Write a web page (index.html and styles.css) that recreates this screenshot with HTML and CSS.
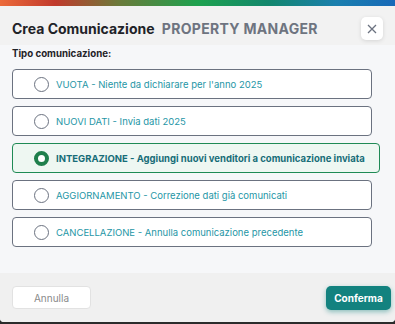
FILE: index.html
```html
<!DOCTYPE html>
<html lang="it">
<head>
    <meta charset="UTF-8">
    <title>Crea Comunicazione</title>
    <link rel="stylesheet" href="styles.css">
</head>
<body>
    <div class="dialog">
        <div class="top-bar"></div>
        <div class="header">
            <div class="title">Crea Comunicazione <span class="subtitle">PROPERTY MANAGER</span></div>
            <button class="close-btn" aria-label="Chiudi">
                <svg width="10" height="10" viewBox="0 0 10 10"><path d="M1 1 L9 9 M9 1 L1 9" stroke="#6b7280" stroke-width="1.3" fill="none"/></svg>
            </button>
        </div>

        <div class="content">
            <div class="label">Tipo comunicazione:</div>
            <div class="options">
                <label class="option">
                    <span class="radio"></span>
                    <span>VUOTA - Niente da dichiarare per l'anno 2025</span>
                </label>
                <label class="option">
                    <span class="radio"></span>
                    <span>NUOVI DATI - Invia dati 2025</span>
                </label>
                <label class="option selected">
                    <span class="radio"></span>
                    <span>INTEGRAZIONE - Aggiungi nuovi venditori a comunicazione inviata</span>
                </label>
                <label class="option">
                    <span class="radio"></span>
                    <span>AGGIORNAMENTO - Correzione dati già comunicati</span>
                </label>
                <label class="option">
                    <span class="radio"></span>
                    <span>CANCELLAZIONE - Annulla comunicazione precedente</span>
                </label>
            </div>
        </div>

        <div class="footer">
            <button class="btn-cancel">Annulla</button>
            <button class="btn-confirm">Conferma</button>
        </div>
    </div>
</body>
</html>
```

FILE: styles.css
```css
body {
    margin: 0;
    padding: 0;
    background-color: #2b2b2b;
    font-family: Inter, "Noto Sans", sans-serif;
}
.dialog {
    width: 395px;
    height: 322px;
    background-color: #f6f7f9;
    border-radius: 0 0 4px 4px;
    overflow: hidden;
    display: flex;
    flex-direction: column;
}
.top-bar {
    height: 6px;
    background: linear-gradient(90deg, #ec6a3a 0%, #c13a2c 14%, #6b7a3a 30%, #1ea24f 50%, #13876d 68%, #1a7fae 85%, #1769b8 100%);
}
.header {
    background-color: #f2f2f2;
    padding: 11px 12px 5px 12px;
    display: flex;
    justify-content: space-between;
    align-items: center;
}
.title {
    font-size: 14px;
    font-weight: 700;
    color: #1f2328;
}
.subtitle {
    color: #6e7480;
    margin-left: 4px;
    letter-spacing: 0.3px;
}
.close-btn {
    width: 22px;
    height: 23px;
    background-color: white;
    border: none;
    border-radius: 5px;
    box-shadow: 0 1px 4px rgba(0,0,0,0.12);
    display: flex;
    align-items: center;
    justify-content: center;
    padding: 0;
}

.content {
    flex: 1;
    padding: 2px 12px 0 12px;
}
.label {
    font-size: 9.7px;
    font-weight: 700;
    color: #1f2328;
    line-height: 14px;
    margin-bottom: 8px;
}
.options {
    display: flex;
    flex-direction: column;
    gap: 7px;
}
.option {
    width: 360px;
    height: 30px;
    box-sizing: border-box;
    background-color: white;
    border: 1px solid #6b7280;
    border-radius: 4px;
    display: flex;
    align-items: center;
    gap: 7px;
    padding-left: 21px;
    font-size: 9.5px;
    color: #2596a6;
}
.radio {
    width: 15px;
    height: 15px;
    flex-shrink: 0;
    box-sizing: border-box;
    border: 1.5px solid #6b7280;
    border-radius: 50%;
    background-color: white;
}
.option.selected {
    width: 368px;
    background-color: #eef7f2;
    border-color: #1f8a55;
    color: #176d78;
    font-weight: 700;
}
.option.selected .radio {
    border: 4px solid #1f7f4c;
}

.footer {
    height: 49px;
    box-sizing: border-box;
    background-color: #f0f0f0;
    padding: 13px 4px 0 12px;
    display: flex;
    justify-content: space-between;
    align-items: flex-start;
}
.btn-cancel {
    width: 79px;
    height: 23px;
    background-color: white;
    border: 1px solid #e2e2e2;
    border-radius: 4px;
    color: #8a8a8a;
    font-family: Inter, sans-serif;
    font-size: 10px;
}
.btn-confirm {
    width: 65px;
    height: 24px;
    background-color: #13827f;
    border: none;
    border-radius: 5px;
    color: white;
    font-family: Inter, sans-serif;
    font-size: 10px;
    font-weight: 700;
    box-shadow: 0 2px 5px rgba(19,130,127,0.45);
}
```
